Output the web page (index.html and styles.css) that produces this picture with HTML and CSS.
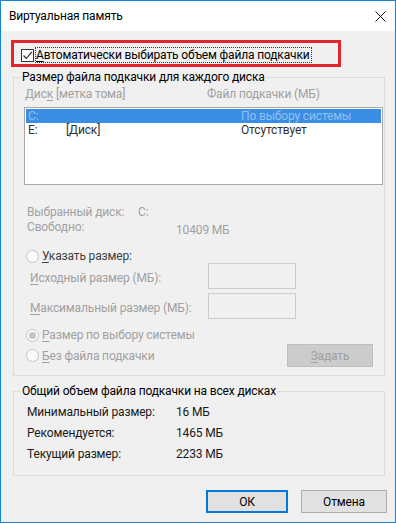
FILE: index.html
```html
<!DOCTYPE html>
<html lang="ru">
<head>
<meta charset="utf-8">
<title>Виртуальная память</title>
<link rel="stylesheet" href="styles.css">
</head>
<body>
<div class="window">
  <div class="titlebar">
    <span class="title">Виртуальная память</span>
    <svg class="close" width="11" height="11" viewBox="0 0 11 11"><path d="M0.5 0.5 L10.5 10.5 M10.5 0.5 L0.5 10.5" stroke="#111" stroke-width="1" fill="none"/></svg>
  </div>
  <div class="content">
    <div class="highlight">
      <span class="checkbox"><svg width="11" height="11" viewBox="0 0 11 11"><path d="M1.5 5.5 L4.3 8.5 L9.8 1.8" stroke="#222" stroke-width="1.1" fill="none"/></svg></span>
      <span class="cb-label"><u>А</u>втоматически выбирать объем файла подкачки</span>
    </div>

    <fieldset class="group group-disk">
      <legend>Размер файла подкачки для каждого диска</legend>
      <div class="cols disabled">
        <span>Дис<u>к</u> [метка тома]</span>
        <span>Файл подкачки (МБ)</span>
      </div>
      <div class="listbox">
        <div class="lrow selected"><span>C:</span><span></span><span>По выбору системы</span></div>
        <div class="lrow"><span>E:</span><span>[Диск]</span><span>Отсутствует</span></div>
      </div>
      <div class="info disabled"><span class="k1">Выбранный диск:</span><span>C:</span></div>
      <div class="info disabled"><span class="k2">Свободно:</span><span class="free">10409 МБ</span></div>
      <div class="radio-row r-custom"><span class="radio"></span><span class="rtext dark"><u>У</u>казать размер:</span></div>
      <div class="field-row"><span class="flabel disabled"><u>И</u>сходный размер (МБ):</span><span class="input"></span></div>
      <div class="field-row r-max"><span class="flabel disabled"><u>М</u>аксимальный размер (МБ):</span><span class="input"></span></div>
      <div class="radio-row r-system"><span class="radio checked"></span><span class="rtext disabled"><u>Р</u>азмер по выбору системы</span></div>
      <div class="radio-row r-none"><span class="radio"></span><span class="rtext disabled"><u>Б</u>ез файла подкачки</span><span class="btn-set"><u>З</u>адать</span></div>
    </fieldset>

    <fieldset class="group group-total">
      <legend>Общий объем файла подкачки на всех дисках</legend>
      <div class="trow"><span class="tk">Минимальный размер:</span><span>16 МБ</span></div>
      <div class="trow"><span class="tk">Рекомендуется:</span><span>1465 МБ</span></div>
      <div class="trow"><span class="tk">Текущий размер:</span><span>2233 МБ</span></div>
    </fieldset>

    <div class="buttons">
      <span class="btn btn-ok">ОК</span>
      <span class="btn btn-cancel">Отмена</span>
    </div>
  </div>
</div>
</body>
</html>
```

FILE: styles.css
```css
* { box-sizing: border-box; }
html, body { margin: 0; padding: 0; background: #f0f0f0; }
body {
  font-family: Roboto, "Noto Sans", sans-serif;
  font-size: 12px;
  line-height: 14px;
  letter-spacing: -0.15px;
  color: #000;
}
u { text-decoration: underline; text-underline-offset: 2px; text-decoration-thickness: 1px; }

.window {
  width: 396px;
  height: 523px;
  border: 1px solid #1883d7;
  background: #f0f0f0;
  display: flex;
  flex-direction: column;
}
.titlebar {
  height: 30px;
  flex: none;
  background: #fff;
  display: flex;
  align-items: center;
  padding-left: 8px;
}
.title { color: #000; }
.close { margin-left: auto; margin-right: 9px; }

.content { display: flex; flex-direction: column; }

.highlight {
  margin: 9px 0 0 10px;
  width: 330px;
  height: 27px;
  border: 3px solid #e3242b;
  display: flex;
  align-items: flex-start;
  padding-left: 7px;
}
.checkbox {
  width: 13px;
  height: 13px;
  margin-top: 6px;
  border: 1px solid #333;
  background: #fff;
  display: flex;
  align-items: center;
  justify-content: center;
  flex: none;
}
.cb-label {
  margin-top: 4px;
  margin-left: 1px;
  border: 1px dotted #333;
  padding: 0 1px 0 0;
  white-space: nowrap;
}

.group {
  margin: 3px 0 0 12px;
  width: 372px;
  border: 1px solid #dcdcdc;
  padding: 0;
  min-width: 0;
}
.group legend {
  margin-left: 7px;
  padding: 0 1px;
  line-height: 14px;
}
.disabled { color: #a0a0a0; }
.dark { color: #404040; }

.cols {
  margin-top: 3px;
  padding-left: 11px;
  display: grid;
  grid-template-columns: 182px 1fr;
}
.listbox {
  margin: 6px 0 0 10px;
  width: 359px;
  height: 78px;
  border: 1px solid #a8a8a8;
  background: #fff;
  padding: 1px 1px;
}
.lrow {
  height: 14px;
  padding-left: 2px;
  display: grid;
  grid-template-columns: 38px 175px 1fr;
  color: #303030;
  white-space: nowrap;
}
.lrow.selected { background: #3a8ee6; color: #93c0ef; }

.info { display: flex; padding-left: 13px; }
.k1 { width: 111px; }
.k2 { width: 149px; }
.group-disk .listbox + .info { margin-top: 20px; }
.info + .info { margin-top: 1px; }
.free { padding-top: 3px; }

.radio-row { display: flex; align-items: center; padding-left: 12px; height: 14px; }
.radio {
  width: 13px;
  height: 13px;
  border-radius: 50%;
  border: 1px solid #c4c4c4;
  background: #fbfbfb;
  flex: none;
  display: flex;
  align-items: center;
  justify-content: center;
}
.radio.checked::after {
  content: "";
  width: 7px;
  height: 7px;
  border-radius: 50%;
  background: #c4c4c4;
}
.rtext { margin-left: 3px; white-space: nowrap; }
.r-custom { margin-top: 12px; }
.r-system { margin-top: 9px; }
.r-none { margin-top: 2px; height: 23px; padding-right: 11px; }

.field-row { display: flex; align-items: center; padding-left: 16px; height: 26px; }
.flabel { width: 178px; padding-top: 3px; white-space: nowrap; }
.input { width: 88px; height: 26px; border: 1px solid #cccccc; background: #f0f0f0; }
.r-max { margin-top: 4px; }

.btn-set {
  margin-left: auto;
  width: 86px;
  height: 23px;
  background: #cccccc;
  border: 1px solid #bfbfbf;
  color: #a0a0a0;
  display: flex;
  align-items: center;
  justify-content: center;
}
.group-disk { padding-bottom: 8px; }

.group-total { margin-top: 8px; padding-bottom: 10px; }
.trow { height: 21px; line-height: 21px; display: flex; padding-left: 13px; color: #1a1a1a; }
.group-total legend + .trow { margin-top: 4px; }
.tk { width: 149px; }

.buttons {
  display: flex;
  justify-content: flex-end;
  gap: 13px;
  margin-top: 14px;
  padding-right: 8px;
}
.btn {
  height: 23px;
  background: #e1e1e1;
  display: flex;
  align-items: center;
  justify-content: center;
  color: #000;
}
.btn-ok { width: 82px; border: 2px solid #0078d7; }
.btn-cancel { width: 86px; border: 1px solid #adadad; }
```
